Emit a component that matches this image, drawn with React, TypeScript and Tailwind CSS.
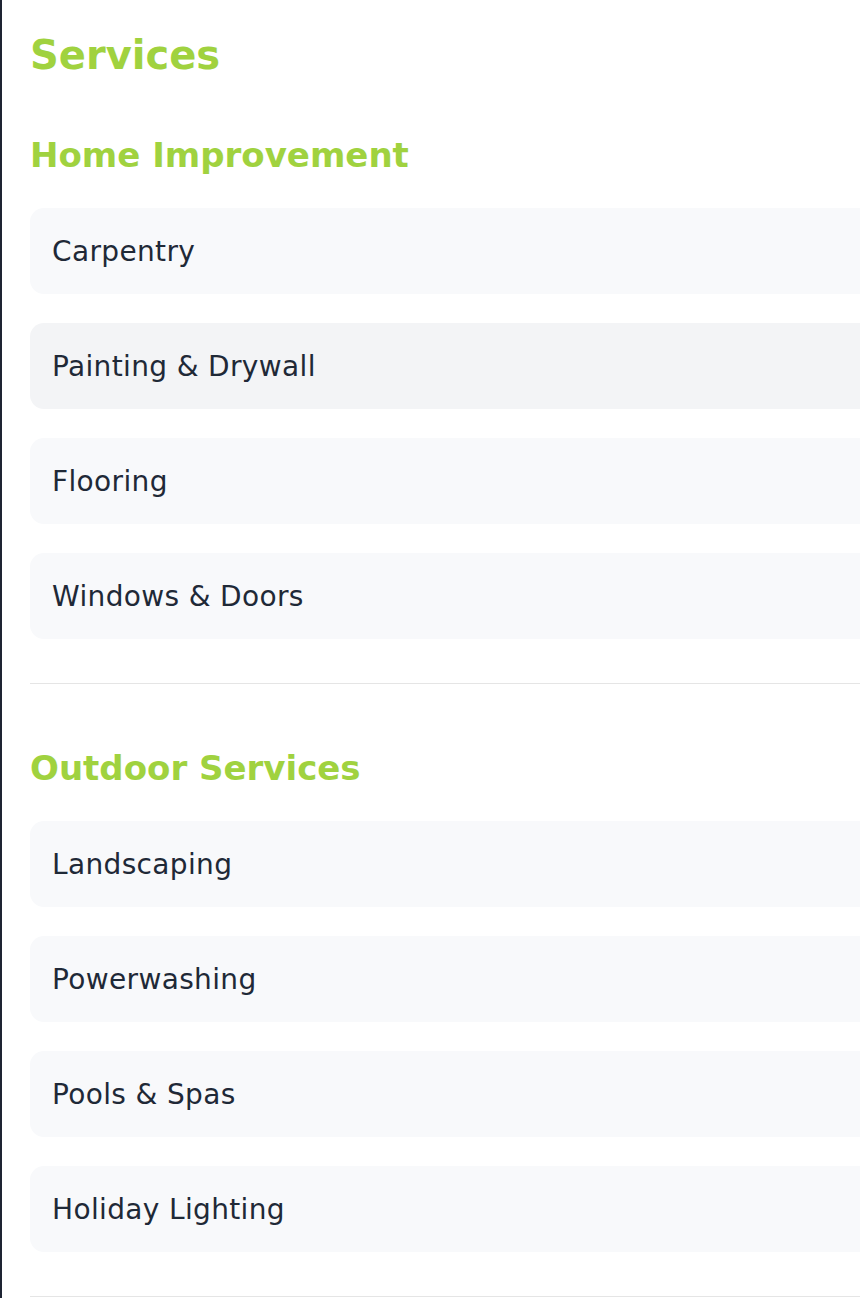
import React from "react"

const sections = [
    { title: "Home Improvement", items: ["Carpentry", "Painting & Drywall", "Flooring", "Windows & Doors"] },
    { title: "Outdoor Services", items: ["Landscaping", "Powerwashing", "Pools & Spas", "Holiday Lighting"] },
]

function ServiceCard({ label, active }: { label: string, active?: boolean }) {
    return (
        <div className={`flex h-[86px] items-center rounded-[14px] px-[22px] pt-[2px] text-[28px] tracking-[0.35px] text-[#1f2937] ${active ? "bg-[#f3f4f6]" : "bg-[#f8f9fb]"}`}>
            {label}
        </div>
    )
}

export default function App() {
    return (
        <div className="min-h-screen overflow-hidden border-l-2 border-[#1e2433] bg-white pl-[28px] pt-[31px]" style={{ fontFamily: '"DejaVu Sans", sans-serif' }}>
            <div className="w-[880px]">
                <h1 className="text-[40px] font-bold leading-[48px] text-[#a0d23f]">Services</h1>
                {sections.map((section, i) => (
                    <section key={section.title} className={i === 0 ? "mt-[56px]" : "mt-[64px]"}>
                        <h2 className="text-[34px] font-bold leading-[40px] text-[#a0d23f]">{section.title}</h2>
                        <div className="mt-[33px] flex flex-col gap-[29px]">
                            {section.items.map((item, j) => (
                                <ServiceCard key={item} label={item} active={i === 0 && j === 1} />
                            ))}
                        </div>
                        <hr className="mt-[44px] border-t border-[#e5e5e5]" />
                    </section>
                ))}
            </div>
        </div>
    )
}
